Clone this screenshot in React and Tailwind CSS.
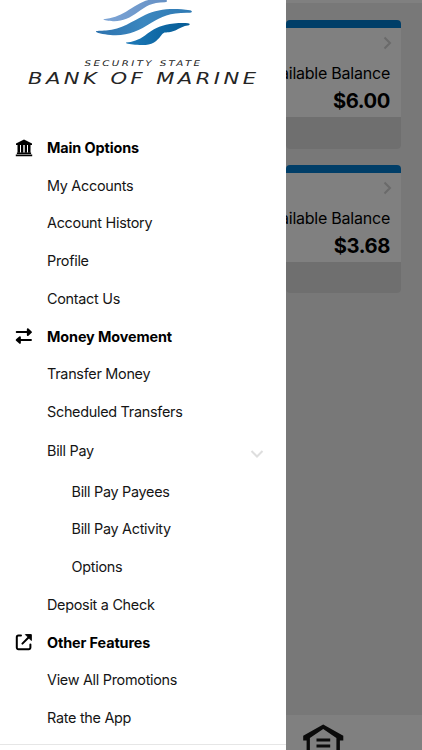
import React from 'react';

const sections = [
  {
    title: 'Main Options',
    icon: BankIcon,
    items: [
      { label: 'My Accounts' },
      { label: 'Account History' },
      { label: 'Profile' },
      { label: 'Contact Us' },
    ],
  },
  {
    title: 'Money Movement',
    icon: TransferIcon,
    items: [
      { label: 'Transfer Money' },
      { label: 'Scheduled Transfers' },
      { label: 'Bill Pay', children: ['Bill Pay Payees', 'Bill Pay Activity', 'Options'] },
      { label: 'Deposit a Check' },
    ],
  },
  {
    title: 'Other Features',
    icon: ExternalIcon,
    items: [{ label: 'View All Promotions' }, { label: 'Rate the App' }],
  },
];

const accounts = [
  { id: 1, balance: '$6.00' },
  { id: 2, balance: '$3.68' },
];

function BankIcon() {
  return (
    <svg viewBox="0 0 18 18" className="h-[18px] w-[18px]" fill="currentColor">
      <path d="M9 .6 17 4.4V6H1V4.4Z" />
      <path d="M2.5 6h2.5v7.8H2.5zM6 6h2.3v7.8H6zM9.7 6H12v7.8H9.7zM13 6h2.5v7.8H13z" />
      <path d="M1.9 13.4h14.2v1.6H1.9zM.8 15.4h16.4v1.8H.8z" />
    </svg>
  );
}

function TransferIcon() {
  return (
    <svg
      viewBox="0 0 18 18"
      className="h-[18px] w-[18px]"
      fill="currentColor"
      stroke="currentColor"
      strokeWidth="1.9"
      strokeLinecap="round"
      strokeLinejoin="round"
    >
      <path d="M1.7 5H14M16 13H4" fill="none" />
      <path d="m12.8 2.2 3.2 2.9-3.2 2.9ZM4.9 10.1 1.7 13l3.2 2.9Z" />
    </svg>
  );
}

function ExternalIcon() {
  return (
    <svg
      viewBox="0 0 18 18"
      className="h-[18px] w-[18px]"
      fill="none"
      stroke="currentColor"
      strokeWidth="2"
      strokeLinecap="round"
      strokeLinejoin="round"
    >
      <path d="M6 2.6H3.4A1.6 1.6 0 0 0 1.8 4.2v10.4a1.6 1.6 0 0 0 1.6 1.6h10.4a1.6 1.6 0 0 0 1.6-1.6v-3" />
      <path d="M7.4 10.6 13.5 4.5" />
      <path d="M10.8 1.6h5.5v5.5Z" fill="currentColor" strokeWidth="1" />
    </svg>
  );
}

function Logo() {
  return (
    <svg viewBox="0 0 285 110" className="h-[110px] w-[285px] shrink-0">
      <defs>
        <linearGradient id="waveTop" x1="0" x2="1">
          <stop offset="0" stopColor="#7da5d6" />
          <stop offset="1" stopColor="#6590c4" />
        </linearGradient>
        <linearGradient id="waveMid" x1="0" x2="1">
          <stop offset="0" stopColor="#2d72ae" />
          <stop offset="0.5" stopColor="#3b87bf" />
          <stop offset="1" stopColor="#2e79b3" />
        </linearGradient>
        <linearGradient id="waveLow" x1="0" x2="1">
          <stop offset="0" stopColor="#1f7ab8" />
          <stop offset="0.5" stopColor="#0f69a6" />
          <stop offset="1" stopColor="#075c95" />
        </linearGradient>
      </defs>
      <path
        d="M103.5 19.2C112 18.5 119 16 126 11.8C136 5.5 143 .2 153 -.8H165C168 .6 167.5 2 165 2.3C151 2.4 146 6.5 138 12C130 18 122 21.6 113 21.2C109 21 103 20.6 103.5 19.2Z"
        fill="url(#waveTop)"
      />
      <path
        d="M96 31.8C95.4 30.6 101 31 106 30.6C122 29 132 21.5 145 15C158 9 172 7.8 190 10.2C192.8 11 192.5 12.6 189 12.8C170 12.5 162 16.5 151 23C139 30.5 128 36 113 35.2C106 34.8 98 33.6 96 31.8Z"
        fill="url(#waveMid)"
      />
      <path
        d="M126 42.4C132 42.3 139 39.8 145 35.5C151 31 156 27 166 24.8C172 23.4 180 22.8 188 23.2C190.8 23.6 190 25.1 187.5 25.6C180 26.8 176 31.8 169 32.2C166.5 32.2 165.5 32.6 164.5 32.6C161 34 160.5 38.5 154 42.5C149 45.3 143 45.4 137 44.7C132 44.3 125.5 43.8 126 42.4Z"
        fill="url(#waveLow)"
      />
      <g fill="#252525" fontFamily="'DejaVu Sans', sans-serif" fontStyle="italic">
        <text x="84.5" y="65.5" fontSize="7.8" textLength="118" lengthAdjust="spacingAndGlyphs" letterSpacing="1.8">
          SECURITY STATE
        </text>
        <text x="28" y="84.2" fontSize="16" textLength="231.5" lengthAdjust="spacingAndGlyphs" letterSpacing="2.6">
          BANK OF MARINE
        </text>
      </g>
    </svg>
  );
}

const Chevron = ({ className, points }) => (
  <svg
    viewBox="0 0 14 14"
    className={`h-[14px] w-[14px] ${className}`}
    fill="none"
    stroke="currentColor"
    strokeWidth="2"
  >
    <polyline points={points} />
  </svg>
);

const MenuItem = ({ item }) => {
  if (!item.children) {
    return <li className="flex h-[37.75px] items-center pl-[47px]">{item.label}</li>;
  }

  return (
    <li>
      <div className="flex h-[41.8px] items-center justify-between pr-[21.5px] pl-[47px]">
        <span className="-mt-px">{item.label}</span>
        <Chevron className="mt-[5px] text-[#dedede]" points="1.5,4 7,9.5 12.5,4" />
      </div>
      <ul>
        {item.children.map((child) => (
          <li key={child} className="flex h-[37.75px] items-center pl-[71.5px]">
            {child}
          </li>
        ))}
      </ul>
    </li>
  );
};

const Drawer = () => {
  return (
    <aside className="flex w-[285.5px] shrink-0 flex-col bg-white text-[14.4px] tracking-[-0.28px] text-[#151515]">
      <Logo />
      <nav className="h-[634.5px] shrink-0 border-b border-[#e6e6e6] pt-[18.7px]">
        {sections.map((section) => (
          <div key={section.title}>
            <h2 className="flex h-[37.75px] items-center pl-[15px] font-bold tracking-[-0.1px] text-black">
              <section.icon />
              <span className="pl-[14px]">{section.title}</span>
            </h2>
            <ul>
              {section.items.map((item) => (
                <MenuItem key={item.label} item={item} />
              ))}
            </ul>
          </div>
        ))}
      </nav>
    </aside>
  );
};

const AccountCard = ({ balance }) => {
  return (
    <div className="mr-[21px] h-[128.5px] shrink-0 overflow-hidden rounded-[4px] bg-[#808080]">
      <div className="h-2 bg-[#003e68]" />
      <div className="flex h-[89px] flex-col items-end pr-[11px]">
        <Chevron className="mt-[8px] -mr-[4px] text-[#6a6a6a]" points="4.5,1.5 10,7 4.5,12.5" />
        <p className="mt-[11px] text-[16px] leading-6 tracking-[-0.23px] whitespace-nowrap">Available Balance</p>
        <p className="mt-px text-[20.2px] leading-[30px] font-bold tracking-[-0.4px]">{balance}</p>
      </div>
      <div className="h-[32px] bg-[#6f6f6f]" />
    </div>
  );
};

export default function App() {
  return (
    <div className="flex h-[750px] w-[422px] overflow-hidden bg-[#787878] font-['Inter',sans-serif] text-black">
      <Drawer />

      {/* Accounts page behind the open drawer */}
      <main className="flex min-w-0 flex-1 flex-col overflow-hidden">
        <div className="h-[3px] shrink-0 bg-[#808080]" />
        <div className="flex flex-1 flex-col gap-[16px] pt-[17.4px]">
          {accounts.map((account) => (
            <AccountCard key={account.id} balance={account.balance} />
          ))}
        </div>
        <footer className="h-[35px] shrink-0 overflow-hidden bg-[#808080] pt-[9px] pl-[16px]">
          <svg viewBox="0 0 42 38" className="h-[38px] w-[42px]" fill="#0b0b0b">
            <path d="M21.2.5 41.3 11.8v4.7h-3.4V38h-3.5V14L21.2 5 7.9 14V38H4.6V16.5H1.2v-4.7Z" />
            <path d="M14.5 14.6h13.7v3H14.5zM14.5 20.4h13.7v3H14.5z" />
          </svg>
        </footer>
      </main>
    </div>
  );
}
